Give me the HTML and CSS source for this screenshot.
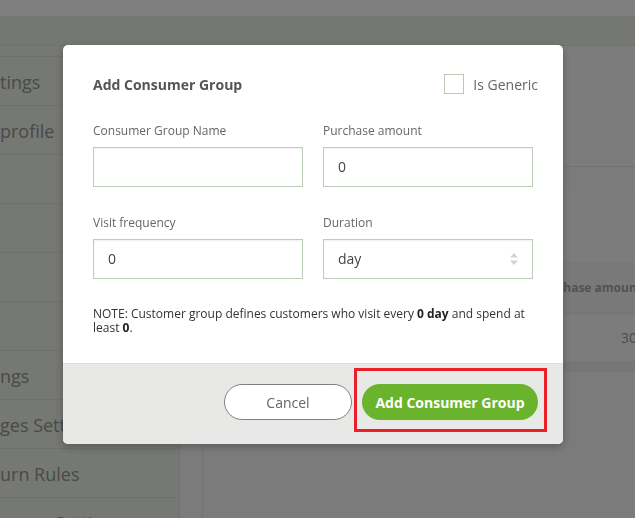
FILE: index.html
```html
<!DOCTYPE html>
<html>
<head>
<meta charset="utf-8">
<link rel="stylesheet" href="styles.css">
</head>
<body>
<div class="page">
  <div class="topbar"></div>
  <div class="subbar"></div>
  <div class="layout">
    <aside class="sidebar">
      <div class="side-strip"></div>
      <div class="side-item">tings</div>
      <div class="side-item">profile</div>
      <div class="side-item"></div>
      <div class="side-item"></div>
      <div class="side-item"></div>
      <div class="side-item"></div>
      <div class="side-item">ngs</div>
      <div class="side-item">ges Settings</div>
      <div class="side-item">urn Rules</div>
      <div class="side-item indent">Settings</div>
    </aside>
    <main class="main">
      <div class="card card-top"></div>
      <div class="card card-table">
        <div class="table-space"></div>
        <div class="table-head"><span class="th-text">Purchase amount</span></div>
        <div class="table-row"><span class="td-text">300</span></div>
      </div>
    </main>
  </div>
</div>

<div class="overlay">
  <div class="modal">
    <div class="modal-body">
      <div class="title-row">
        <h2 class="title">Add Consumer Group</h2>
        <label class="generic"><span class="checkbox"></span><span>Is Generic</span></label>
      </div>
      <div class="grid">
        <div class="field">
          <div class="label">Consumer Group Name</div>
          <div class="input"></div>
        </div>
        <div class="field">
          <div class="label">Purchase amount</div>
          <div class="input">0</div>
        </div>
        <div class="field">
          <div class="label">Visit frequency</div>
          <div class="input">0</div>
        </div>
        <div class="field">
          <div class="label">Duration</div>
          <div class="input select">day
            <svg class="arrows" width="10" height="14" viewBox="0 0 10 14"><path d="M5 1 L9 5.5 H1 Z" fill="#d4d4d4"/><path d="M5 13 L9 8.5 H1 Z" fill="#d4d4d4"/></svg>
          </div>
        </div>
      </div>
      <p class="note">NOTE: Customer group defines customers who visit every <b>0 day</b> and spend at least <b>0</b>.</p>
    </div>
    <div class="modal-footer">
      <button class="btn btn-cancel">Cancel</button>
      <span class="highlight"><button class="btn btn-add">Add Consumer Group</button></span>
    </div>
  </div>
</div>
</body>
</html>
```

FILE: styles.css
```css
html, body {
  margin: 0;
  padding: 0;
}
body {
  font-family: "Open Sans", "Liberation Sans", sans-serif;
  background: #f7f7f7;
  width: 635px;
  height: 518px;
  overflow: hidden;
}
.page {
  width: 635px;
  height: 518px;
  overflow: hidden;
}
.topbar {
  height: 16px;
  background: #ffffff;
}
.subbar {
  height: 29px;
  background: #ebeee7;
  border-bottom: 1px solid #e0e3dc;
}
.layout {
  display: flex;
  height: 472px;
}
.sidebar {
  width: 180px;
  flex: none;
  background: #edf0e9;
  border-right: 1px solid #e0e3dc;
  box-sizing: border-box;
}
.side-strip {
  height: 10px;
  border-bottom: 1px solid #dfe2da;
}
.side-item {
  height: 48px;
  border-bottom: 1px solid #dfe2da;
  font-size: 18px;
  line-height: 50px;
  color: #929492;
  text-indent: 0;
  white-space: nowrap;
  overflow: hidden;
}
.side-item.indent {
  text-indent: 55px;
}
.main {
  flex: 1;
  margin-left: 22px;
  background: #f6f6f6;
  border-left: 1px solid #e8eae4;
}
.card {
  background: #f8f8f8;
}
.card-top {
  height: 120px;
  border-bottom: 1px solid #e6e8e2;
}
.card-table {
  margin-top: 22px;
  border-bottom: 11px solid #eceee9;
}
.table-space {
  height: 73px;
}
.table-head {
  height: 50px;
  border-top: 1px solid #f0f0f0;
  border-bottom: 1px solid #e8e8e8;
  background: #f3f3f2;
  text-align: right;
  overflow: hidden;
  white-space: nowrap;
}
.th-text {
  display: inline-block;
  margin-right: -7px;
  font-size: 12px;
  font-weight: 700;
  color: #a4a4a4;
  line-height: 50px;
}
.table-row {
  height: 47px;
  text-align: right;
  overflow: hidden;
  white-space: nowrap;
}
.td-text {
  display: inline-block;
  margin-right: -10px;
  font-size: 14px;
  color: #9a9a9a;
  line-height: 47px;
}

.overlay {
  position: fixed;
  inset: 0;
  background: rgba(0, 0, 0, 0.5);
}
.modal {
  position: absolute;
  left: 63px;
  top: 45px;
  width: 500px;
  height: 399px;
  background: #ffffff;
  border-radius: 5px;
  overflow: hidden;
  display: flex;
  flex-direction: column;
  box-shadow: 0 3px 9px rgba(0, 0, 0, 0.25);
}
.modal-body {
  padding: 29px 30px 0 30px;
  flex: 1;
}
.title-row {
  display: flex;
  justify-content: space-between;
  align-items: center;
  height: 20px;
}
.title {
  margin: 0;
  font-size: 14px;
  font-weight: 700;
  color: #555555;
}
.generic {
  display: flex;
  align-items: center;
  gap: 9px;
  font-size: 14px;
  color: #666666;
  margin-right: -5px;
}
.checkbox {
  width: 18px;
  height: 18px;
  border: 1px solid #b9c9b6;
  display: inline-block;
}
.grid {
  display: grid;
  grid-template-columns: 210px 210px;
  column-gap: 20px;
  row-gap: 27px;
  margin-top: 28px;
}
.label {
  font-size: 12px;
  line-height: 18px;
  color: #666666;
  margin-bottom: 7px;
}
.input {
  height: 40px;
  box-sizing: border-box;
  border: 1px solid #bccdb8;
  box-shadow: inset 0 1px 2px rgba(0, 0, 0, 0.06);
  padding: 0 14px;
  font-size: 14px;
  line-height: 38px;
  color: #444444;
  position: relative;
}
.select .arrows {
  position: absolute;
  right: 13px;
  top: 12px;
}
.note {
  margin: 28px 0 0 0;
  font-size: 12px;
  line-height: 14px;
  color: #333333;
}
.note b {
  color: #222;
}
.modal-footer {
  height: 81px;
  box-sizing: border-box;
  background: #e8e8e6;
  border-top: 1px solid #dedede;
  display: flex;
  justify-content: flex-end;
  align-items: flex-start;
  padding: 20px 25px 0 0;
  gap: 10px;
}
.btn {
  height: 36px;
  border-radius: 18px;
  font-family: "Open Sans", "Liberation Sans", sans-serif;
  font-size: 14px;
  cursor: pointer;
  box-sizing: border-box;
}
.btn-cancel {
  width: 128px;
  background: #ffffff;
  border: 1px solid #808080;
  color: #666666;
}
.btn-add {
  width: 176px;
  background: #6ab42d;
  border: none;
  color: #ffffff;
  font-weight: 700;
  display: block;
}
.highlight {
  position: relative;
  display: block;
}
.highlight::after {
  content: "";
  position: absolute;
  left: -8px;
  right: -9px;
  top: -16px;
  bottom: -12px;
  border: 3px solid #e8202a;
}
```
